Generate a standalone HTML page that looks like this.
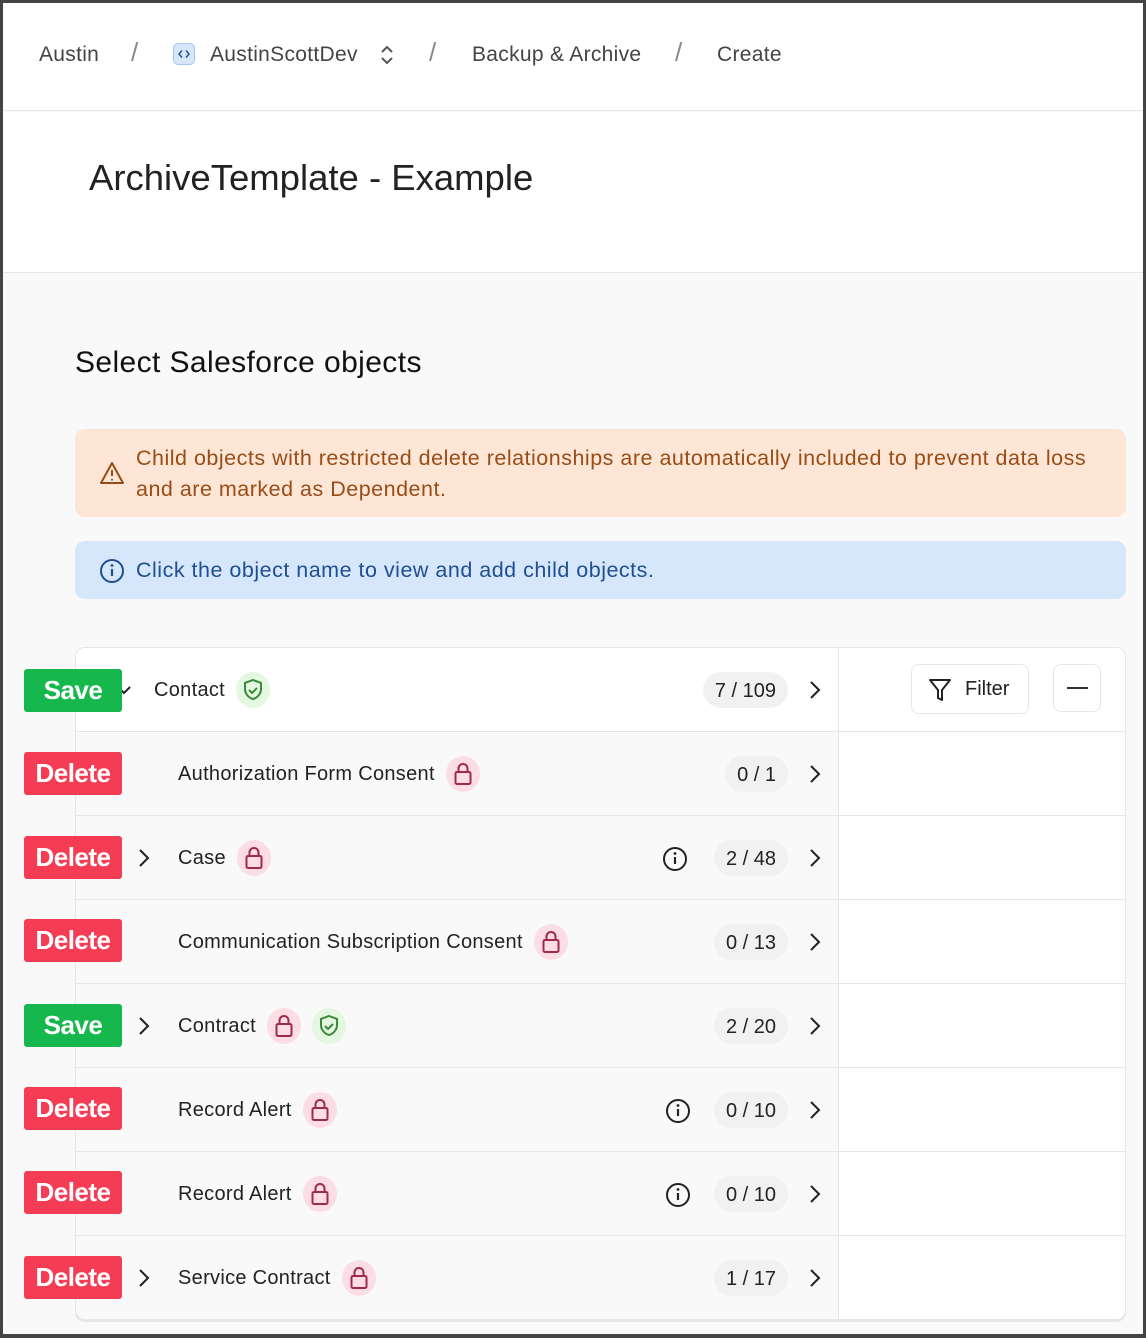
<!DOCTYPE html>
<html><head><meta charset="utf-8"><style>
*{box-sizing:border-box;margin:0;padding:0}
body{width:1146px;height:1338px;background:#444;font-family:"Liberation Sans",sans-serif;position:relative;overflow:hidden}
.frame{position:absolute;left:3px;top:3px;width:1140px;height:1331px;background:#f9f9f9;overflow:hidden}
.a{position:absolute}
.hdr{left:0;top:0;width:1140px;height:108px;background:#fff;border-bottom:1px solid #e6e6e6}
.bc{font-size:21px;color:#444;top:40px;letter-spacing:0.3px}
.sl{font-size:26px;color:#888;top:34px;font-weight:300}
.ttl{left:0;top:109px;width:1140px;height:161px;background:#fff;border-bottom:1px solid #e6e6e6}
.warn{left:72px;top:426px;width:1051px;height:88px;background:#fde6d6;border-radius:10px;color:#9a4c16;font-size:21.5px;line-height:31px;padding:14px 0 0 61px;letter-spacing:0.5px}
.info{left:72px;top:538px;width:1051px;height:58px;background:#d6e6fb;border-radius:10px;color:#1f4f91;font-size:21.5px;padding:17px 0 0 61px;letter-spacing:0.5px}
.tbl{left:72px;top:644px;width:1051px;height:673px;background:#fff;border:1px solid #e6e6e6;border-radius:10px;overflow:hidden;box-shadow:0 2px 0 #e6e6e6}
.row{position:absolute;left:0;width:762px;height:84px;background:#f9f9f9;border-bottom:1px solid #e6e6e6}
.rr{position:absolute;left:762px;width:289px;height:84px;background:#fff;border-bottom:1px solid #e6e6e6;border-left:1px solid #e6e6e6}
.nm{position:absolute;top:24px;height:36px;display:flex;align-items:center;gap:11px;font-size:20px;color:#222;letter-spacing:0.3px}
.cnt{position:absolute;top:24px;height:36px;right:50px;background:#f1f1f1;border-radius:18px;font-size:20px;color:#222;padding:8px 12px 0}
.chv{position:absolute;right:17px;top:32px}
.lch{position:absolute;left:62px;top:32px}
.inf{position:absolute;top:30px}
.bd{width:34px;height:36px;border-radius:50%;display:inline-block;flex:none}
.pk{background:#fcdce5}.gr{background:#e3f7e1}
.btn{position:absolute;left:21px;width:98px;height:43px;border-radius:3px;color:#fff;font-weight:bold;font-size:26px;text-align:center;line-height:43px;letter-spacing:-0.5px}
.sv{background:#16b84e}.dl{background:#f43d55}
</style></head><body><div class="frame">
<svg width="0" height="0" style="position:absolute"><defs>
<symbol id="lock" viewBox="0 0 34 36"><rect x="9.5" y="16" width="15" height="12" rx="1.5" fill="none" stroke="#a02a4a" stroke-width="2"/><path d="M12.5 16v-3.5a4.5 4.5 0 0 1 9 0v3.5" fill="none" stroke="#a02a4a" stroke-width="2"/></symbol>
<symbol id="shield" viewBox="0 0 34 36"><path d="M17 8l8 3v6c0 5-4 9-8 10-4-1-8-5-8-10v-6z" fill="none" stroke="#3a8a3a" stroke-width="2"/><path d="M13 18l3 3 5-5" fill="none" stroke="#3a8a3a" stroke-width="2"/></symbol>
<symbol id="chev" viewBox="0 0 12 20"><path d="M2 2l8 8-8 8" fill="none" stroke="#222" stroke-width="2"/></symbol>
<symbol id="info" viewBox="0 0 26 26"><circle cx="13" cy="13" r="11" fill="none" stroke="#222" stroke-width="2"/><path d="M13 11v7" stroke="#222" stroke-width="2.2"/><circle cx="13" cy="7.5" r="1.4" fill="#222"/></symbol>
</defs></svg>
<div class="a hdr">
<div class="a bc" style="left:36px">Austin</div>
<div class="a sl" style="left:128px">/</div>
<div class="a" style="left:170px;top:40px;width:22px;height:22px;background:#d6e6fb;border:1px solid #a9c6ef;border-radius:5px"><svg width="20" height="20" viewBox="0 0 20 20"><path d="M8 6.5L5 10l3 3.5M12 6.5l3 3.5-3 3.5" fill="none" stroke="#1f4f91" stroke-width="1.4"/></svg></div>
<div class="a bc" style="left:207px">AustinScottDev</div>
<svg class="a" style="left:376px;top:41px" width="16" height="22" viewBox="0 0 16 22"><path d="M3 8l5-5 5 5M3 14l5 5 5-5" fill="none" stroke="#555" stroke-width="2"/></svg>
<div class="a sl" style="left:426px">/</div>
<div class="a bc" style="left:469px">Backup &amp; Archive</div>
<div class="a sl" style="left:672px">/</div>
<div class="a bc" style="left:714px">Create</div>
</div>
<div class="a ttl"><div class="a" style="left:86px;top:45px;font-size:36.5px;color:#222;letter-spacing:0px">ArchiveTemplate - Example</div></div>
<div class="a" style="left:72px;top:343px;font-size:30px;color:#111;letter-spacing:0.4px">Select Salesforce objects</div>
<div class="a warn">Child objects with restricted delete relationships are automatically included to prevent data loss<br>and are marked as Dependent.
<svg class="a" style="left:24px;top:32px" width="26" height="24" viewBox="0 0 26 24"><path d="M13 2L2 22h22z" fill="none" stroke="#9a4c16" stroke-width="2" stroke-linejoin="round"/><path d="M13 9v6M13 18v1.5" stroke="#9a4c16" stroke-width="2"/></svg></div>
<div class="a info">Click the object name to view and add child objects.
<svg class="a" style="left:24px;top:17px" width="26" height="26" viewBox="0 0 26 26"><circle cx="13" cy="13" r="11" fill="none" stroke="#1f4f91" stroke-width="2"/><path d="M13 11v7" stroke="#1f4f91" stroke-width="2.2"/><circle cx="13" cy="7.5" r="1.4" fill="#1f4f91"/></svg></div>

<div class="a tbl">
<div class="row" style="top:0;background:#fff"><svg class="a" style="left:40px;top:34px" width="16" height="16" viewBox="0 0 16 16"><path d="M2 5l6 6 6-6" fill="none" stroke="#222" stroke-width="2"/></svg><div class="nm" style="left:78px">Contact<svg class="bd gr"><use href="#shield"/></svg></div><div class="cnt">7 / 109</div><svg class="chv" width="12" height="20"><use href="#chev"/></svg></div>
<div class="rr" style="top:0"><div class="a" style="left:72px;top:16px;width:118px;height:50px;border:1px solid #e6e6e6;border-radius:8px;font-size:20px;color:#222;padding:13px 0 0 53px">Filter<svg class="a" style="left:16px;top:12px" width="24" height="26" viewBox="0 0 24 26"><path d="M2 3h20l-8 10v10l-4-2v-8z" fill="none" stroke="#222" stroke-width="2" stroke-linejoin="round"/></svg></div><div class="a" style="left:214px;top:16px;width:48px;height:48px;border:1px solid #e6e6e6;border-radius:8px"><div class="a" style="left:13px;top:22px;width:21px;height:2px;background:#333"></div></div></div>

<div class="row" style="top:84px"><div class="nm" style="left:102px">Authorization Form Consent<svg class="bd pk"><use href="#lock"/></svg></div><div class="cnt">0 / 1</div><svg class="chv" width="12" height="20"><use href="#chev"/></svg></div>
<div class="rr" style="top:84px"></div>

<div class="row" style="top:168px"><svg class="lch" width="12" height="20"><use href="#chev"/></svg><div class="nm" style="left:102px">Case<svg class="bd pk"><use href="#lock"/></svg></div><svg class="inf" style="left:586px" width="26" height="26"><use href="#info"/></svg><div class="cnt">2 / 48</div><svg class="chv" width="12" height="20"><use href="#chev"/></svg></div>
<div class="rr" style="top:168px"></div>

<div class="row" style="top:252px"><div class="nm" style="left:102px">Communication Subscription Consent<svg class="bd pk"><use href="#lock"/></svg></div><div class="cnt">0 / 13</div><svg class="chv" width="12" height="20"><use href="#chev"/></svg></div>
<div class="rr" style="top:252px"></div>

<div class="row" style="top:336px"><svg class="lch" width="12" height="20"><use href="#chev"/></svg><div class="nm" style="left:102px">Contract<svg class="bd pk"><use href="#lock"/></svg><svg class="bd gr"><use href="#shield"/></svg></div><div class="cnt">2 / 20</div><svg class="chv" width="12" height="20"><use href="#chev"/></svg></div>
<div class="rr" style="top:336px"></div>

<div class="row" style="top:420px"><div class="nm" style="left:102px">Record Alert<svg class="bd pk"><use href="#lock"/></svg></div><svg class="inf" style="left:589px" width="26" height="26"><use href="#info"/></svg><div class="cnt">0 / 10</div><svg class="chv" width="12" height="20"><use href="#chev"/></svg></div>
<div class="rr" style="top:420px"></div>

<div class="row" style="top:504px"><div class="nm" style="left:102px">Record Alert<svg class="bd pk"><use href="#lock"/></svg></div><svg class="inf" style="left:589px" width="26" height="26"><use href="#info"/></svg><div class="cnt">0 / 10</div><svg class="chv" width="12" height="20"><use href="#chev"/></svg></div>
<div class="rr" style="top:504px"></div>

<div class="row" style="top:588px;border-bottom:none"><svg class="lch" width="12" height="20"><use href="#chev"/></svg><div class="nm" style="left:102px">Service Contract<svg class="bd pk"><use href="#lock"/></svg></div><div class="cnt">1 / 17</div><svg class="chv" width="12" height="20"><use href="#chev"/></svg></div>
<div class="rr" style="top:588px;border-bottom:none"></div>
</div>

<div class="btn sv" style="top:666px">Save</div>
<div class="btn dl" style="top:749px">Delete</div>
<div class="btn dl" style="top:833px">Delete</div>
<div class="btn dl" style="top:916px">Delete</div>
<div class="btn sv" style="top:1001px">Save</div>
<div class="btn dl" style="top:1084px">Delete</div>
<div class="btn dl" style="top:1168px">Delete</div>
<div class="btn dl" style="top:1253px">Delete</div>
</div>
</body></html>
